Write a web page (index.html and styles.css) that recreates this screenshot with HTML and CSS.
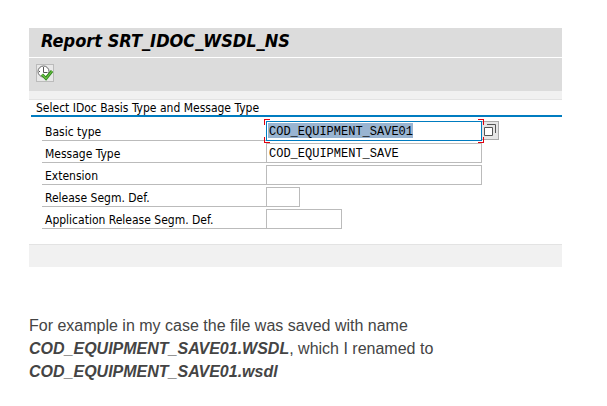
FILE: index.html
```html
<!DOCTYPE html>
<html lang="en">
<head>
<meta charset="utf-8">
<title>Report SRT_IDOC_WSDL_NS</title>
<link rel="stylesheet" href="styles.css">
</head>
<body>
<main class="article">
  <form class="report">
    <h1 class="report-title">Report SRT_IDOC_WSDL_NS</h1>
    <div class="toolbar">
      <button class="execute" type="button" aria-label="Execute">
        <svg viewBox="0 0 16 16" width="16" height="16" fill="none">
          <circle cx="6.500" cy="6.500" r="5.500" fill="#fff" stroke="#666"/>
          <path d="M6.500 2v5.500h4M2 6.500h1M6.500 11v1" stroke="#555"/>
          <path d="M5 9.500l4 4 6-7.500" stroke="#2f8a1c" stroke-width="3"/>
          <path d="M5 9.500l4 4 6-7.500" stroke="#6cc044" stroke-width="1.200"/>
        </svg>
      </button>
    </div>
    <div class="strip"></div>
    <fieldset class="group">
      <legend class="group-title">Select IDoc Basis Type and Message Type</legend>
      <div class="rows">
        <div class="row">
          <label for="basic">Basic type</label>
          <div class="focus-frame"><input id="basic" class="field long active" value="COD_EQUIPMENT_SAVE01"></div>
          <button class="value-help" type="button" aria-label="Choose a value">
            <svg viewBox="0 0 16 17" width="16" height="17" fill="none" stroke="#555">
              <path d="M2.500 5.500h8v8h-8z" fill="#fff"/>
              <path d="M5 2.500h8.500v8.500"/>
            </svg>
          </button>
        </div>
        <div class="row">
          <label for="message">Message Type</label>
          <input id="message" class="field long" value="COD_EQUIPMENT_SAVE">
        </div>
        <div class="row">
          <label for="extension">Extension</label>
          <input id="extension" class="field long">
        </div>
        <div class="row">
          <label for="release">Release Segm. Def.</label>
          <input id="release" class="field short">
        </div>
        <div class="row">
          <label for="app-release">Application Release Segm. Def.</label>
          <input id="app-release" class="field medium">
        </div>
      </div>
    </fieldset>
    <div class="footer-strip"></div>
  </form>
  <p class="note">For example in my case the file was saved with name <strong>COD_EQUIPMENT_SAVE01.WSDL</strong>, which I renamed to <strong>COD_EQUIPMENT_SAVE01.wsdl</strong></p>
</main>
</body>
</html>
```
FILE: styles.css
```css
* { box-sizing: border-box; }

body {
  margin: 0;
  background: #fff;
  color: #444;
  font-family: "Liberation Sans", Arial, sans-serif;
}

.article { padding: 28px 45px 20px 29px; }

.report {
  color: #000;
  font: 12px/16px "DejaVu Sans Condensed", Tahoma, sans-serif;
}

.report-title {
  margin: 0;
  padding: 0 12px 4px;
  background: #dcdcdc;
  border-bottom: 1px solid #fff;
  font: italic bold 18px/25px "DejaVu Sans Condensed", Tahoma, sans-serif;
}

.toolbar {
  height: 33px;
  padding: 6px 7px;
  background: #dcdcdc;
}

.execute {
  display: block;
  width: 18px;
  height: 18px;
  padding: 0;
  border: 1px solid #bbb;
  background: #e8e8e8;
}

.execute svg, .value-help svg { display: block; }

.strip {
  height: 9px;
  background: #f1f1f1;
  border-bottom: 1px solid #e3e3e3;
}

.group {
  min-width: 0;
  margin: 0 0 0 2px;
  padding: 0;
  border: 0;
}

.group-title {
  width: 100%;
  padding: 1px 5px 0;
  border-bottom: 2px solid #007cc0;
  line-height: 14px;
}

.rows {
  display: grid;
  gap: 2px;
  padding: 4px 0 15px 11px;
}

.row {
  display: flex;
  height: 20px;
}

.row label {
  width: 224px;
  padding: 3px 3px 0;
  border-bottom: 1px solid #bbb;
}

.field {
  display: block;
  height: 20px;
  padding: 2px 2px 0;
  border: 1px solid #bbb;
  border-radius: 0;
  outline: 0;
  background: #fff;
  color: #000;
  font: 12px/16px "Liberation Mono", "Courier New", monospace;
}

.long { width: 216px; }
.medium { width: 76px; }
.short { width: 34px; }

.active {
  border-color: #007cc0;
  background: linear-gradient(#99b4d1, #99b4d1) 1px 1px / 145px 15px no-repeat #fff;
}

.focus-frame {
  position: relative;
  z-index: 1;
}

/* Red corner marks around the focused field */
.focus-frame::before {
  content: "";
  position: absolute;
  inset: -2px;
  pointer-events: none;
  --mark: linear-gradient(#e00010, #e00010);
  background:
    var(--mark) 0 0 / 6px 1px, var(--mark) 0 0 / 1px 6px,
    var(--mark) 100% 0 / 6px 1px, var(--mark) 100% 0 / 1px 6px,
    var(--mark) 0 100% / 6px 1px, var(--mark) 0 100% / 1px 6px,
    var(--mark) 100% 100% / 6px 1px, var(--mark) 100% 100% / 1px 6px;
  background-repeat: no-repeat;
}

.value-help {
  width: 17px;
  height: 19px;
  padding: 0;
  border: 1px solid #aaa;
  border-left: 0;
  background: #e6e6e6;
}

.footer-strip {
  height: 23px;
  background: #f1f1f1;
  border-top: 1px solid #e3e3e3;
}

.note {
  max-width: 440px;
  margin: 47px 0 0;
  font-size: 16px;
  line-height: 23px;
}

.note strong { font-style: italic; }
```
